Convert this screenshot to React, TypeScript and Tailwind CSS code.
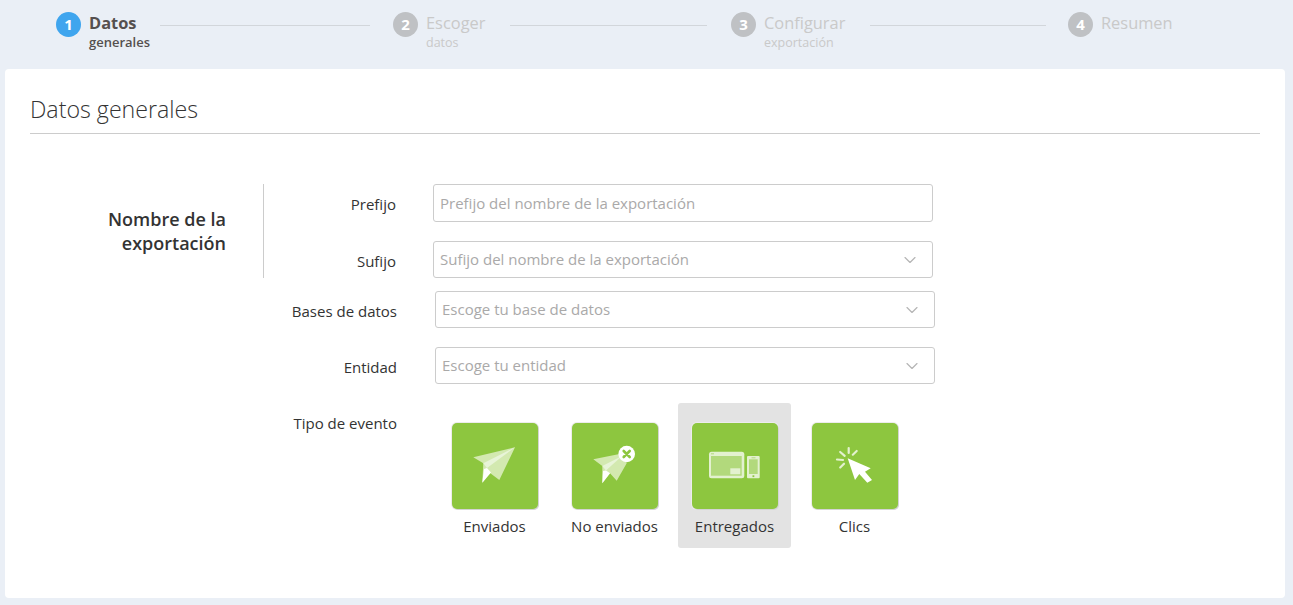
import React from "react";
import { ChevronDown } from "lucide-react";

const font = { fontFamily: '"Open Sans", "Noto Sans", sans-serif' };

const steps = [
  { n: 1, title: "Datos", sub: "generales", line: "w-[210px]", gap: "ml-[10px]", width: "w-[337px]" },
  { n: 2, title: "Escoger", sub: "datos", line: "w-[197px]", gap: "ml-[25px]", width: "w-[338px]" },
  { n: 3, title: "Configurar", sub: "exportación", line: "w-[176px]", gap: "ml-[25px]", width: "w-[337px]" },
  { n: 4, title: "Resumen", sub: "", line: "", gap: "", width: "" },
];

const PlaneIcon = () => (
  <svg viewBox="0 0 86 86" className="w-[86px] h-[86px]">
    <polygon points="63,24.300 21.300,34.300 31.300,40.300 30.300,59.700 38,50 47.300,57" fill="#d3e9b0" />
    <polygon points="63,24.300 31.300,40.300 35,45" fill="#e8f4d8" />
    <polygon points="32,46 30.300,59.700 39,49.500 35,45" fill="#ffffff" />
  </svg>
);

const PlaneXIcon = () => (
  <svg viewBox="0 0 86 86" className="w-[86px] h-[86px]">
    <polygon points="50,30.500 21.300,36.300 30.300,43 30.300,60.300 38,50.300 44.700,57.700 54.700,40.300" fill="#d3e9b0" />
    <polygon points="50,33 30.300,43 34,47.500" fill="#e8f4d8" />
    <polygon points="31,48 30.300,60.300 38,50.300 34,47.500" fill="#ffffff" />
    <circle cx="54.700" cy="31" r="8.300" fill="#ffffff" />
    <path d="M51.700 28 L57.700 34 M57.700 28 L51.700 34" stroke="#8dc63f" strokeWidth="2.600" strokeLinecap="round" />
  </svg>
);

const DevicesIcon = () => (
  <svg viewBox="0 0 86 86" className="w-[86px] h-[86px]">
    <rect x="17" y="28.700" width="35.300" height="26.600" rx="2.500" fill="#e3f1cf" />
    <rect x="19" y="33" width="30.700" height="19.700" fill="#b2d97c" />
    <rect x="38.300" y="45.300" width="10" height="6" fill="#e3f1cf" />
    <rect x="19" y="30.300" width="3" height="1" fill="#b2d97c" />
    <rect x="55" y="33" width="12.700" height="22.300" rx="1" fill="#e3f1cf" />
    <rect x="57" y="36.300" width="8.700" height="14.700" fill="#b2d97c" />
    <rect x="59.500" y="34.300" width="4" height="1" fill="#b2d97c" />
    <rect x="60.500" y="52.300" width="1.800" height="1.800" fill="#8dc63f" />
  </svg>
);

const ClickIcon = () => (
  <svg viewBox="0 0 86 86" className="w-[86px] h-[86px]">
    <polygon points="35.700,35.300 58.700,45.300 53,48.700 60,57 55.300,59.700 47.300,51 43,57" fill="#ffffff" />
    <g stroke="#e3f1cf" strokeWidth="2.200" strokeLinecap="round">
      <path d="M36.700 25 L36.700 30" />
      <path d="M44.700 28 L40.800 31.700" />
      <path d="M28.200 29 L32.700 32.800" />
      <path d="M25 36.500 L31 37" />
      <path d="M28.200 44.500 L32 40.700" />
    </g>
  </svg>
);

const events = [
  { label: "Enviados", icon: <PlaneIcon />, active: false },
  { label: "No enviados", icon: <PlaneXIcon />, active: false },
  { label: "Entregados", icon: <DevicesIcon />, active: true },
  { label: "Clics", icon: <ClickIcon />, active: false },
];

const Field = ({ placeholder, select, height }: { placeholder: string; select?: boolean; height?: string }) => (
  <div className={`flex items-center justify-between w-[500px] ${height ?? "h-[37px]"} border border-[#ccc] rounded-[3px] bg-white pl-[6px] pr-[12px] text-[15px] text-[#aaa9a9]`}>
    <span>{placeholder}</span>
    {select && <ChevronDown size={20} strokeWidth={1.4} className="text-[#b5b5b5]" />}
  </div>
);

export default function App() {
  return (
    <div style={font} className="w-[1293px] h-[605px] overflow-hidden bg-[#eaeff6] text-[#333]">
      {/* stepper */}
      <div className="flex h-[69px] pl-[56px] pt-[12px]">
        {steps.map((s) => (
          <div key={s.n} className={`flex items-start ${s.width}`}>
            <div className={`w-[25px] h-[25px] rounded-full flex items-center justify-center text-white text-[15px] font-bold ${s.n === 1 ? "bg-[#3fa5ee]" : "bg-[#bfc1c4]"}`}>
              {s.n}
            </div>
            <div className="ml-[8px] flex flex-col">
              <span className={`text-[16.400px] leading-[22px] ${s.n === 1 ? "font-bold text-[#55504f]" : "text-[#c9c9c9]"}`}>{s.title}</span>
              <span className={`leading-[17px] ${s.n === 1 ? "text-[13px] font-semibold text-[#55504f]" : "text-[12.500px] text-[#c9c9c9]"}`}>{s.sub}</span>
            </div>
            {s.line && <div className={`${s.gap} ${s.line} mt-[13px] h-px bg-[#d2d6db]`} />}
          </div>
        ))}
      </div>

      {/* card */}
      <div className="ml-[5px] w-[1280px] h-[529px] bg-white rounded-[4px] px-[25px] pt-[24px]">
        <h1 className="text-[23.200px] leading-[33px] text-[#333] font-light pb-[7px] border-b border-[#ccc]">Datos generales</h1>

        <div className="flex mt-[50px]">
          <div className="w-[196px] pt-[23px] text-right text-[18px] leading-[24px] font-semibold text-[#333]">
            Nombre de la exportación
          </div>
          <div className="ml-[37px] w-px h-[94px] bg-[#ccc]" />
          <div className="flex flex-col">
            <div className="flex items-start">
              <div className="w-[132px] pt-[10px] text-right text-[15px] leading-[20px]">Prefijo</div>
              <div className="ml-[37px]"><Field placeholder="Prefijo del nombre de la exportación" height="h-[38px]" /></div>
            </div>
            <div className="flex items-start mt-[19px]">
              <div className="w-[132px] pt-[10px] text-right text-[15px] leading-[20px]">Sufijo</div>
              <div className="ml-[37px]"><Field placeholder="Sufijo del nombre de la exportación" select /></div>
            </div>
          </div>
        </div>

        <div className="flex items-start mt-[13px]">
          <div className="w-[367px] pt-[10px] text-right text-[15px] leading-[20px]">Bases de datos</div>
          <div className="ml-[38px]"><Field placeholder="Escoge tu base de datos" select /></div>
        </div>
        <div className="flex items-start mt-[19px]">
          <div className="w-[367px] pt-[10px] text-right text-[15px] leading-[20px]">Entidad</div>
          <div className="ml-[38px]"><Field placeholder="Escoge tu entidad" select /></div>
        </div>

        <div className="flex items-start mt-[19px]">
          <div className="w-[367px] pt-[10px] text-right text-[15px] leading-[20px]">Tipo de evento</div>
          <div className="ml-[41px] flex gap-[7px]">
            {events.map((e) => (
              <div key={e.label} className={`w-[113px] h-[145px] rounded-[3px] flex flex-col items-center pt-[20px] ${e.active ? "bg-[#e3e3e3]" : ""}`}>
                <div className="w-[86px] h-[86px] rounded-[5px] bg-[#8dc63f] shadow-[1px_1px_0_0_#d4d4d4,0_0_0_1px_#ececec]">{e.icon}</div>
                <div className="mt-[7px] text-[15px] leading-[20px] text-[#333]">{e.label}</div>
              </div>
            ))}
          </div>
        </div>
      </div>
    </div>
  );
}
